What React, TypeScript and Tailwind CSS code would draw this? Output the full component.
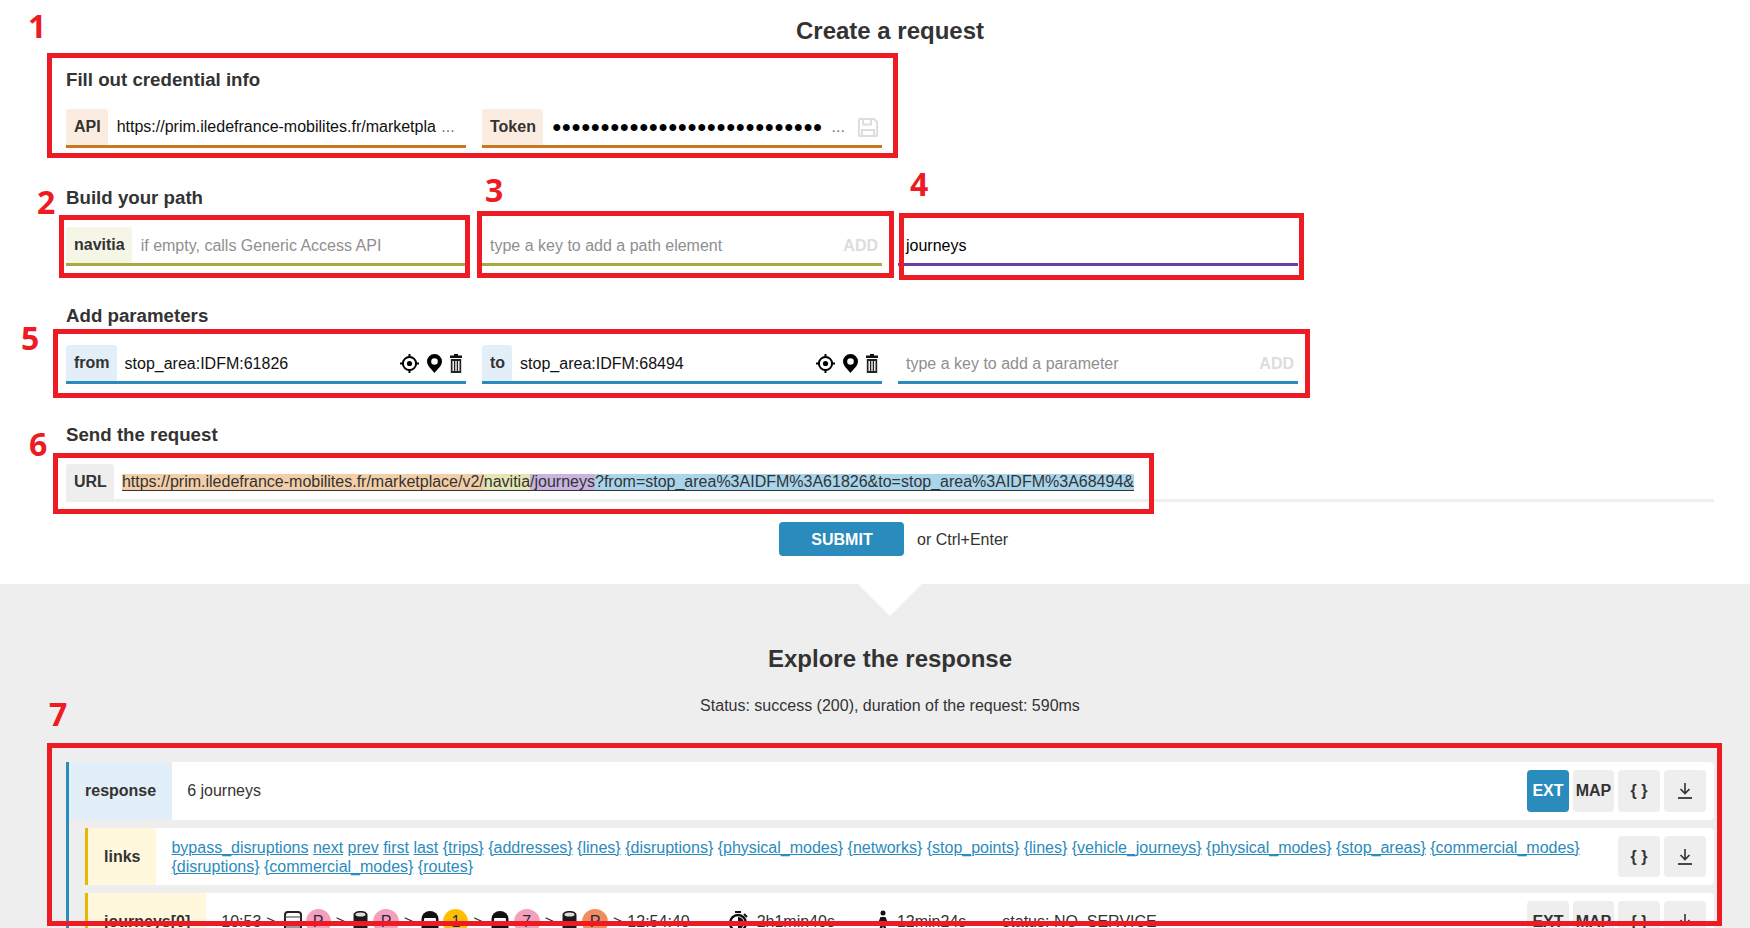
import React from "react";

function Field({ label, labelClass, lineClass, children, h = "h-[39px]" }: { label?: string; labelClass?: string; lineClass: string; children: React.ReactNode; h?: string }) {
  return (
    <div className={`flex items-center ${h} border-b-[3px] ${lineClass}`}>
      {label && (
        <span className={`flex h-full items-center rounded-t-[3px] pr-[7px] pl-2 font-bold ${labelClass}`}>{label}</span>
      )}
      {children}
    </div>
  );
}

function Target() {
  return (
    <svg width="19" height="19" viewBox="0 0 19 19" className="shrink-0">
      <circle cx="9.5" cy="9.5" r="6.6" fill="none" stroke="#000" strokeWidth="2" />
      <circle cx="9.5" cy="9.5" r="2.6" fill="#000" />
      <path d="M9.5 0v4M9.5 15v4M0 9.5h4M15 9.5h4" stroke="#000" strokeWidth="2" />
    </svg>
  );
}

function Pin() {
  return (
    <svg width="15" height="19" viewBox="0 0 15 19" className="shrink-0">
      <path fillRule="evenodd" d="M7.5 0A7.500 7.500 0 0 0 0 7.500c0 4.300 5.200 8.300 7.500 11.500C9.800 15.800 15 11.800 15 7.500A7.500 7.500 0 0 0 7.500 0Zm0 4.200a3.300 3.300 0 1 1 0 6.600 3.300 3.300 0 0 1 0-6.600Z" fill="#000" />
    </svg>
  );
}

function Trash() {
  return (
    <svg width="12" height="19" viewBox="0 0 12 19" className="shrink-0">
      <path d="M4 0h4v1.500h4V4H0V1.500h4Z" fill="#111" />
      <path fillRule="evenodd" d="M.8 5h10.400v14H.8Zm1.700 2v10h1.400V7Zm2.800 0v10h1.400V7Zm2.800 0v10h1.400V7Z" fill="#222" />
    </svg>
  );
}

function Save() {
  return (
    <svg width="20" height="19" viewBox="0 0 20 19" className="shrink-0">
      <path d="M1 2a1 1 0 0 1 1-1h14l3 3v13a1 1 0 0 1-1 1H2a1 1 0 0 1-1-1Z M5 1.500v5h8v-5 M4 18v-6h12v6" fill="none" stroke="#ddd" strokeWidth="2" />
    </svg>
  );
}

function Download() {
  return (
    <svg width="14" height="16" viewBox="0 0 14 16">
      <path d="M7 0v10M2.500 6 7 10.500 11.500 6" fill="none" stroke="#333" strokeWidth="1.600" />
      <path d="M0 15h14" stroke="#333" strokeWidth="1.800" />
    </svg>
  );
}

function Btn({ children, active, wide, h = "h-[42px]" }: { children: React.ReactNode; active?: boolean; wide?: boolean; h?: string }) {
  return (
    <button className={`flex ${h} ${wide ? "w-[42px]" : "w-[41px]"} items-center justify-center rounded-[4px] font-bold ${active ? "bg-[#2a8bbd] text-white" : "bg-[#eeeeee] text-[#333]"}`}>
      {children}
    </button>
  );
}

function TreeRow({ label, labelClass, border, children, buttons }: { label: string; labelClass: string; border: string; children: React.ReactNode; buttons: React.ReactNode }) {
  return (
    <div className={`flex rounded-r-[4px] bg-white ${border}`}>
      <div className={`flex shrink-0 items-center px-4 font-bold ${labelClass}`}>{label}</div>
      <div className="flex min-w-0 flex-1 items-center pr-4 pl-[15px]">{children}</div>
      <div className="flex shrink-0 items-center gap-1 py-2 pr-2">{buttons}</div>
    </div>
  );
}

function Circle({ text, cls, w }: { text: string; cls: string; w: string }) {
  return (
    <span className={`ml-[3px] flex h-[26px] ${w} items-center justify-center rounded-full text-[#1c2a5a] ${cls}`}>{text}</span>
  );
}

function Rail() {
  return (
    <svg width="20" height="26" viewBox="0 0 20 26" className="ml-[7px] shrink-0">
      <path d="M2 6a3 3 0 0 1 3-3h10a3 3 0 0 1 3 3v15H2Z" fill="#fff" stroke="#222" strokeWidth="2" />
      <path d="M2 8h16" stroke="#555" strokeWidth="1.200" />
      <path d="M3 12h14v9H3Z" fill="#999" />
      <path d="M5 23h3M12 23h3" stroke="#222" strokeWidth="2" />
    </svg>
  );
}

function Metro() {
  return (
    <svg width="15" height="26" viewBox="0 0 15 26" className="ml-[8px] shrink-0">
      <path d="M.5 6C.5 3.500 3.500 2 7.500 2s7 1.500 7 4v14a2 2 0 0 1-2 2h-10a2 2 0 0 1-2-2Z" fill="#1a1a1a" />
      <ellipse cx="7.5" cy="5.500" rx="5" ry="2" fill="#ddd" />
      <path d="M3 23h2v2H3ZM10 23h2v2h-2Z" fill="#111" />
    </svg>
  );
}

function Bus() {
  return (
    <svg width="18" height="26" viewBox="0 0 18 26" className="ml-[8px] shrink-0">
      <path d="M.5 10a8.500 8 0 0 1 17 0v12H.5Z" fill="#111" />
      <path d="M3 10a1 1 0 0 1 1-1h10a1 1 0 0 1 1 1v6H3Z" fill="#fff" />
      <path d="M4 24h2M12 24h2" stroke="#111" strokeWidth="2" />
    </svg>
  );
}

function Stopwatch() {
  return (
    <svg width="20" height="24" viewBox="0 0 20 24" className="shrink-0">
      <path d="M7 1h6v2H7Z" fill="#111" />
      <circle cx="10" cy="13" r="8" fill="none" stroke="#111" strokeWidth="2.400" />
      <path d="M10 13V7a6 6 0 0 1 0 12Z" fill="#111" />
      <path d="M16 4l3 3" stroke="#111" strokeWidth="2" />
    </svg>
  );
}

function Walker() {
  return (
    <svg width="14" height="24" viewBox="0 0 14 24" className="shrink-0">
      <circle cx="7" cy="3" r="2.500" fill="#111" />
      <path d="M4.500 7h5l2.500 6-1.500.7-1.500-3V15l3 8H9.500L7 16l-2.500 7H2l3-9v-3.500l-1.500 3.200L2 13Z" fill="#111" />
    </svg>
  );
}

function Gt() {
  return <span className="ml-[5px]">&gt;</span>;
}

function Annot({ n, cls, numCls }: { n: string; cls: string; numCls: string }) {
  return (
    <>
      <div className={`pointer-events-none absolute border-[5px] border-[#ed1c24] ${cls}`} />
      <div className={`pointer-events-none absolute font-['Open_Sans',sans-serif] text-[32px] leading-[32px] font-bold text-[#ed1c24] ${numCls}`}>{n}</div>
    </>
  );
}

const links = ["bypass_disruptions", "next", "prev", "first", "last", "{trips}", "{addresses}", "{lines}", "{disruptions}", "{physical_modes}", "{networks}", "{stop_points}", "{lines}", "{vehicle_journeys}", "{physical_modes}", "{stop_areas}", "{commercial_modes}", "{disruptions}", "{commercial_modes}", "{routes}"];

export default function App() {
  const h2 = "text-[18.7px] leading-[22px] font-bold";
  return (
    <div className="relative flex h-screen flex-col overflow-hidden bg-white font-['Liberation_Sans',Arial,sans-serif] text-base text-[#333]">
      <section className="h-[584px] shrink-0 pr-[36px] pl-[66px]">
        <h1 className="pt-[17px] text-center text-2xl leading-[28px] font-bold">Create a request</h1>

        <h2 className={`mt-[24px] ${h2}`}>Fill out credential info</h2>
        <div className="mt-[18px] grid grid-cols-[400px_400px_400px] gap-4">
          <Field label="API" labelClass="bg-[#faece0]" lineClass="border-[#c87820]">
            <span className="min-w-0 flex-1 pl-[9px] whitespace-nowrap text-[#111]">https://prim.iledefrance-mobilites.fr/marketpla <span className="ml-[1px] text-[#777]">...</span></span>
          </Field>
          <Field label="Token" labelClass="bg-[#faece0]" lineClass="border-[#c87820]">
            <span className="min-w-0 flex-1 pl-[9px] whitespace-nowrap text-[#000]">●●●●●●●●●●●●●●●●●●●●●●●●●●●●<span className="ml-[9px] text-[#777]">...</span></span>
            <span className="mr-[4px]"><Save /></span>
          </Field>
        </div>

        <h2 className={`mt-[39px] ${h2}`}>Build your path</h2>
        <div className="mt-[18px] grid grid-cols-[400px_400px_400px] gap-4">
          <Field label="navitia" labelClass="bg-[#f5f6e6]" lineClass="border-[#a5ab3f]">
            <span className="pt-[1px] pl-[9px] text-[#8f8f8f]">if empty, calls Generic Access API</span>
          </Field>
          <Field lineClass="border-[#a5ab3f]">
            <span className="flex-1 pt-[1px] pl-2 text-[#8f8f8f]">type a key to add a path element</span>
            <span className="pt-[1px] pr-1 font-bold text-[#dddddd]">ADD</span>
          </Field>
          <Field lineClass="border-[#6c3fa6]">
            <span className="pt-[1px] pl-2 text-[#000]">journeys</span>
          </Field>
        </div>

        <h2 className={`mt-[39px] ${h2}`}>Add parameters</h2>
        <div className="mt-[18px] grid grid-cols-[400px_400px_400px] gap-4">
          <Field label="from" labelClass="bg-[#e2eff8]" lineClass="border-[#2a8bbd]">
            <span className="flex-1 pt-[1px] pl-[8px] text-[#111]">stop_area:IDFM:61826</span>
            <span className="flex items-center gap-2 pr-[4px]"><Target /><Pin /><Trash /></span>
          </Field>
          <Field label="to" labelClass="bg-[#e2eff8]" lineClass="border-[#2a8bbd]">
            <span className="flex-1 pt-[1px] pl-[8px] text-[#111]">stop_area:IDFM:68494</span>
            <span className="flex items-center gap-2 pr-[4px]"><Target /><Pin /><Trash /></span>
          </Field>
          <Field lineClass="border-[#2a8bbd]">
            <span className="flex-1 pt-[1px] pl-2 text-[#8f8f8f]">type a key to add a parameter</span>
            <span className="pt-[1px] pr-1 font-bold text-[#dddddd]">ADD</span>
          </Field>
        </div>

        <h2 className={`mt-[40px] ${h2}`}>Send the request</h2>
        <div className="mt-[18px]">
          <Field label="URL" labelClass="bg-[#eeeeee]" lineClass="border-[#eeeeee]" h="h-[38px]">
            <span className="ml-2 flex border-b border-[#333] pt-[1px] leading-[16px] whitespace-nowrap">
              <span className="bg-[#f3cfa9]">https://prim.iledefrance-mobilites.fr/marketplace/v2/</span>
              <span className="bg-[#e4e7b4]">navitia</span>
              <span className="bg-[#c9b3e0]">/journeys</span>
              <span className="bg-[#a8d5ec]">?from=stop_area%3AIDFM%3A61826&amp;to=stop_area%3AIDFM%3A68494&amp;</span>
            </span>
          </Field>
        </div>

        <div className="mt-[20px] ml-[713px] flex items-center gap-[13px]">
          <button className="h-[34px] w-[125px] rounded-[4px] bg-[#2a8bbd] pt-[1px] pl-[1px] font-bold text-white">SUBMIT</button>
          <span className="pt-[1px]">or Ctrl+Enter</span>
        </div>
      </section>

      <section className="relative flex-1 bg-[#eeeeee] pr-[36px] pl-[66px]">
        <div className="absolute top-0 left-1/2 h-0 w-0 -translate-x-[17px] border-x-[32px] border-t-[32px] border-x-transparent border-t-white" />
        <h1 className="pt-[61px] text-center text-2xl leading-[28px] font-bold">Explore the response</h1>
        <p className="mt-[23px] text-center leading-[20px]">Status: success (200), duration of the request: 590ms</p>

        <div className="mt-[46px] border-l-[3px] border-[#2a8bbd]">
          <TreeRow
            label="response"
            labelClass="bg-[#e2eff8]"
            border=""
            buttons={<><Btn active wide>EXT</Btn><Btn>MAP</Btn><Btn wide>{"{ }"}</Btn><Btn wide><Download /></Btn></>}
          >
            <span>6 journeys</span>
          </TreeRow>
          <div className="flex flex-col gap-2 pt-2 pl-4">
            <TreeRow
              label="links"
              labelClass="bg-[#fff8dc]"
              border="border-l-[3px] border-[#e6b800]"
              buttons={<><Btn wide h="h-[41px]">{"{ }"}</Btn><Btn wide h="h-[41px]"><Download /></Btn></>}
            >
              <div className="leading-[19px] text-[#2a8bbd]">
                {links.map((l, i) => (
                  <React.Fragment key={i}><a className="underline">{l}</a>{" "}</React.Fragment>
                ))}
              </div>
            </TreeRow>
            <TreeRow
              label="journeys[0]"
              labelClass="bg-[#fff8dc]"
              border="border-l-[3px] border-[#e6b800]"
              buttons={<><Btn wide>EXT</Btn><Btn>MAP</Btn><Btn wide>{"{ }"}</Btn><Btn wide><Download /></Btn></>}
            >
              <div className="flex items-center whitespace-nowrap">
                <span>10:53</span><Gt />
                <Rail /><Circle text="P" cls="bg-[#f4a0b8]" w="w-[25px]" /><Gt />
                <Metro /><Circle text="P" cls="ml-[5px] bg-[#f4a0b8]" w="w-[26px]" /><Gt />
                <Bus /><Circle text="1" cls="ml-[4px] bg-[#ffbe00]" w="w-[25px]" /><Gt />
                <Bus /><Circle text="7" cls="ml-[5px] bg-[#f4a0b8]" w="w-[26px]" /><Gt />
                <Metro /><Circle text="P" cls="ml-[5px] bg-[#f28c5a]" w="w-[26px]" /><Gt />
                <span className="ml-[5px]">12:54:40</span>
                <span className="ml-[38px]"><Stopwatch /></span>
                <span className="ml-[9px]">2h1min40s</span>
                <span className="ml-[41px]"><Walker /></span>
                <span className="ml-[7px]">12min24s</span>
                <span className="ml-[36px]">status: NO_SERVICE</span>
              </div>
            </TreeRow>
          </div>
        </div>
      </section>

      <Annot n="1" cls="left-[47px] top-[53px] h-[105px] w-[851px]" numCls="left-[28px] top-[10px]" />
      <Annot n="2" cls="left-[59px] top-[215px] h-[63px] w-[411px]" numCls="left-[37px] top-[186px]" />
      <Annot n="3" cls="left-[477px] top-[211px] h-[67px] w-[417px]" numCls="left-[485px] top-[174px]" />
      <Annot n="4" cls="left-[899px] top-[213px] h-[67px] w-[405px]" numCls="left-[910px] top-[168px]" />
      <Annot n="5" cls="left-[53px] top-[329px] h-[69px] w-[1257px]" numCls="left-[21px] top-[322px]" />
      <Annot n="6" cls="left-[53px] top-[453px] h-[61px] w-[1101px]" numCls="left-[29px] top-[428px]" />
      <Annot n="7" cls="left-[47px] top-[743px] h-[183px] w-[1675px]" numCls="left-[49px] top-[698px]" />
    </div>
  );
}
